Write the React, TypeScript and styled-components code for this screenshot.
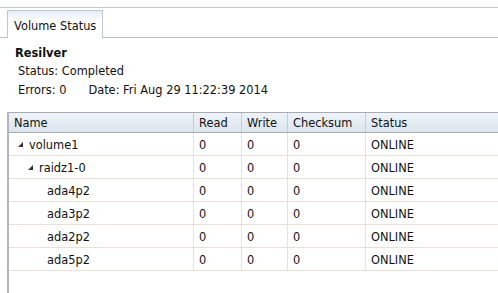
import React from 'react';
import styled, { createGlobalStyle } from 'styled-components';

const GlobalStyle = createGlobalStyle`
  html, body {
    margin: 0;
    padding: 0;
    background: #ffffff;
    overflow: hidden;
  }
  body {
    font-family: "DejaVu Sans", Verdana, sans-serif;
    font-size: 11.4px;
    color: #111;
  }
`;

const Page = styled.div`
  width: 498px;
  height: 293px;
  overflow: hidden;
  position: relative;
`;

const TopRule = styled.div`
  margin-top: 7px;
  height: 0;
  border-top: 1px solid #c8c8d0;
`;

const TabBar = styled.div`
  display: flex;
  align-items: flex-end;
  height: 29px;
  padding-left: 7px;
  border-bottom: 1px solid #b9bdc8;
`;

const Tab = styled.div`
  width: 96px;
  height: 28px;
  box-sizing: border-box;
  border: 1px solid #c3c7d0;
  border-bottom: none;
  background: linear-gradient(180deg, #e3edf8 0px, #ffffff 10px);
  display: flex;
  align-items: center;
  padding: 3px 0 0 6px;
  margin-bottom: -1px;
`;

const Section = styled.div`
  padding: 7px 0 0 15px;
`;

const Heading = styled.div`
  font-weight: bold;
  height: 17px;
  line-height: 17px;
`;

const InfoLine = styled.div`
  display: flex;
  gap: 22px;
  padding-left: 3px;
  height: 19px;
  line-height: 19px;
`;

const Grid = styled.div`
  margin: 12px 0 0 7px;
  border-left: 2px solid #b3b4bc;
  height: 200px;
  box-sizing: border-box;
  width: 560px;
`;

const Row = styled.div<{ $header?: boolean }>`
  display: grid;
  grid-template-columns: 185px 48px 46px 78px 200px;
  height: ${p => (p.$header ? '21px' : '23px')};
  box-sizing: border-box;
  background: ${p => (p.$header ? 'linear-gradient(180deg, #eef3f8 0%, #dbe5ef 100%)' : '#fff')};
  border-top: ${p => (p.$header ? '1px solid #a9abb2' : 'none')};
  border-bottom: 1px solid ${p => (p.$header ? '#a9abb2' : '#eedfd0')};
`;

const Cell = styled.div<{ $header?: boolean; $indent?: number }>`
  display: flex;
  align-items: center;
  padding-left: ${p => 5 + (p.$indent ?? 0)}px;
  border-right: 1px solid ${p => (p.$header ? '#c6cbd4' : '#eedfd0')};
  white-space: nowrap;
  overflow: hidden;
  padding-top: ${p => (p.$header ? '0' : '1px')};
`;

const Expander = styled.svg`
  width: 5px;
  height: 5px;
  margin-right: 6px;
  flex-shrink: 0;
`;

type Node = { name: string; level: number; expanded?: boolean };

const nodes: Node[] = [
  { name: 'volume1', level: 0, expanded: true },
  { name: 'raidz1-0', level: 1, expanded: true },
  { name: 'ada4p2', level: 2 },
  { name: 'ada3p2', level: 2 },
  { name: 'ada2p2', level: 2 },
  { name: 'ada5p2', level: 2 },
];

const App: React.FC = () => {
  return (
    <Page>
      <GlobalStyle />
      <TopRule />
      <TabBar>
        <Tab>Volume Status</Tab>
      </TabBar>
      <Section>
        <Heading>Resilver</Heading>
        <InfoLine>
          <span>Status: Completed</span>
        </InfoLine>
        <InfoLine>
          <span>Errors: 0</span>
          <span>Date: Fri Aug 29 11:22:39 2014</span>
        </InfoLine>
      </Section>
      <Grid>
        <Row $header>
          <Cell $header>Name</Cell>
          <Cell $header>Read</Cell>
          <Cell $header>Write</Cell>
          <Cell $header>Checksum</Cell>
          <Cell $header>Status</Cell>
        </Row>
        {nodes.map(n => (
          <Row key={n.name}>
            <Cell $indent={n.expanded ? 4 + n.level * 10 : 33}>
              {n.expanded && (
                <Expander viewBox="0 0 5 5">
                  <polygon points="5,0 5,5 0,5" fill="#333" />
                </Expander>
              )}
              {n.name}
            </Cell>
            <Cell>0</Cell>
            <Cell>0</Cell>
            <Cell>0</Cell>
            <Cell>ONLINE</Cell>
          </Row>
        ))}
      </Grid>
    </Page>
  );
};

export default App;
